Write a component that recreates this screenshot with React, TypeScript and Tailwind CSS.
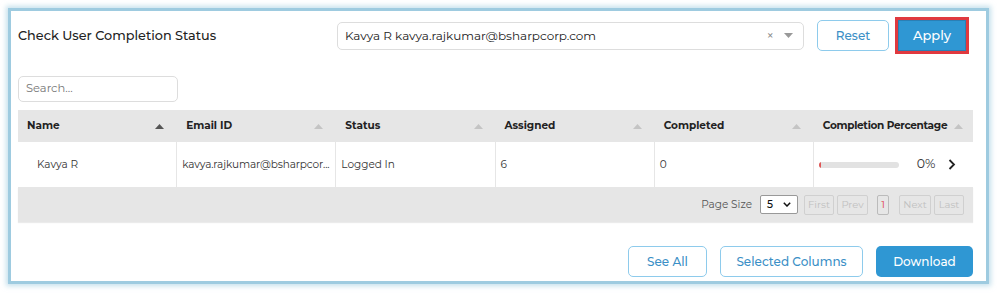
import React from "react";

const font = { fontFamily: '"Montserrat", "Inter", "Open Sans", sans-serif' };

function SortArrow({ dark }: { dark?: boolean }) {
  return (
    <svg width="9" height="5" viewBox="0 0 9 5" className="shrink-0">
      <path d="M0 5 L4.5 0 L9 5 Z" fill={dark ? "#555" : "#c4c4c4"} />
    </svg>
  );
}

const headers = ["Name", "Email ID", "Status", "Assigned", "Completed"];

export default function App() {
  return (
    <div className="w-[997px] h-[293px] bg-white pt-[8px] pl-[8px]" style={font}>
      <div className="w-[981px] h-[276px] border-[3px] border-[#9ecbe0] shadow-[0_0_5px_2px_rgba(158,203,224,0.6)] bg-white pl-[7px] pt-[6px]">
        {/* top row */}
        <div className="flex items-center h-[37px]">
          <div className="w-[319px] shrink-0 text-[12.8px] font-medium text-[#222]">Check User Completion Status</div>
          <div className="w-[467px] h-[28px] shrink-0 border border-[#ddd] rounded-[5px] flex items-center pl-[7px] pr-[10px] text-[12px] text-[#222]">
            <span className="flex-1">Kavya R kavya.rajkumar@bsharpcorp.com</span>
            <span className="text-[#888] text-[13px] mr-[10px]">×</span>
            <svg width="9" height="5" viewBox="0 0 9 5"><path d="M0 0 L9 0 L4.5 5 Z" fill="#999" /></svg>
          </div>
          <button className="ml-[13px] w-[72px] h-[31px] border border-[#8ecbec] rounded-[5px] text-[#3b8fc6] text-[12px] font-medium bg-white">Reset</button>
          <div className="ml-[6px] w-[74px] h-[37px] border-[3px] border-[#e0393f]">
            <button className="w-full h-full bg-[#2f97d3] border border-[#2a7fb5] text-white text-[13px] font-medium">Apply</button>
          </div>
        </div>
        {/* search */}
        <div className="mt-[22px] w-[160px] h-[26px] border border-[#ddd] rounded-[5px] flex items-center pl-[7px] text-[11.5px] text-[#777]">Search...</div>
        {/* table */}
        <div className="mt-[8px] w-[955px]">
          <div className="grid grid-cols-6 h-[32px] bg-[#e6e6e6]">
            {headers.map((h, i) => (
              <div key={h} className="flex items-center justify-between pl-[9px] pr-[13px] text-[10.5px] font-bold text-[#222] whitespace-nowrap">
                <span>{h}</span>
                <SortArrow dark={i === 0} />
              </div>
            ))}
            <div className="flex items-center justify-between pl-[9px] pr-[10px] text-[10.5px] font-bold text-[#222] whitespace-nowrap">
              <span className="tracking-[-0.3px]">Completion Percentage</span>
              <SortArrow />
            </div>
          </div>
          <div className="grid grid-cols-6 h-[45px] bg-white text-[10.5px] text-[#333]">
            <div className="flex items-center pl-[19px] border-r border-[#e6e6e6]">Kavya R</div>
            <div className="flex items-center pl-[5px] border-r border-[#e6e6e6] whitespace-nowrap tracking-[-0.1px]">kavya.rajkumar@bsharpcor...</div>
            <div className="flex items-center pl-[5px] border-r border-[#e6e6e6]">Logged In</div>
            <div className="flex items-center pl-[5px] border-r border-[#e6e6e6]">6</div>
            <div className="flex items-center pl-[5px] border-r border-[#e6e6e6]">0</div>
            <div className="flex items-center pl-[5px]">
              <div className="w-[80px] h-[6px] rounded-full bg-[#e2e2e2] overflow-hidden">
                <div className="w-[2px] h-full bg-[#e05555]" />
              </div>
              <span className="ml-[18px] text-[12.5px]">0%</span>
              <svg width="8" height="11" viewBox="0 0 8 11" className="ml-[13px]"><path d="M1.5 1 L6 5.5 L1.5 10" fill="none" stroke="#222" strokeWidth="1.8" /></svg>
            </div>
          </div>
          <div className="h-[35px] bg-[#e6e6e6] shadow-[0_1px_1px_rgba(0,0,0,0.08)] flex items-center justify-end pr-[9px] text-[10.5px] text-[#555]">
            <span className="mr-[8px]">Page Size</span>
            <div className="w-[38px] h-[19px] bg-white border border-[#999] rounded-[2px] flex items-center justify-between px-[6px] text-[#111] font-medium">
              <span>5</span>
              <svg width="8" height="5" viewBox="0 0 8 5"><path d="M0.8 0.8 L4 4 L7.2 0.8" fill="none" stroke="#111" strokeWidth="1.5" /></svg>
            </div>
            <div className="ml-[6px] w-[30px] h-[20px] border border-[#d0d0d0] rounded-[2px] flex items-center justify-center text-[#c0c0c0] text-[10px]">First</div>
            <div className="ml-[3px] w-[31px] h-[20px] border border-[#d0d0d0] rounded-[2px] flex items-center justify-center text-[#c0c0c0] text-[10px]">Prev</div>
            <div className="ml-[9px] w-[12px] h-[20px] border border-[#bbb] rounded-[2px] flex items-center justify-center text-[#e0393f] text-[10px]">1</div>
            <div className="ml-[10px] w-[32px] h-[20px] border border-[#d0d0d0] rounded-[2px] flex items-center justify-center text-[#c0c0c0] text-[10px]">Next</div>
            <div className="ml-[3px] w-[30px] h-[20px] border border-[#d0d0d0] rounded-[2px] flex items-center justify-center text-[#c0c0c0] text-[10px]">Last</div>
          </div>
        </div>
        {/* bottom buttons */}
        <div className="mt-[24px] w-[955px] flex justify-end items-center">
          <button className="w-[79px] h-[31px] border border-[#8ecbec] rounded-[5px] text-[#3b8fc6] text-[12px] font-medium bg-white">See All</button>
          <button className="ml-[13px] w-[143px] h-[31px] border border-[#8ecbec] rounded-[5px] text-[#3b8fc6] text-[12px] font-medium bg-white">Selected Columns</button>
          <button className="ml-[13px] w-[97px] h-[31px] rounded-[5px] bg-[#2f97d3] text-white text-[12px] font-medium">Download</button>
        </div>
      </div>
    </div>
  );
}
